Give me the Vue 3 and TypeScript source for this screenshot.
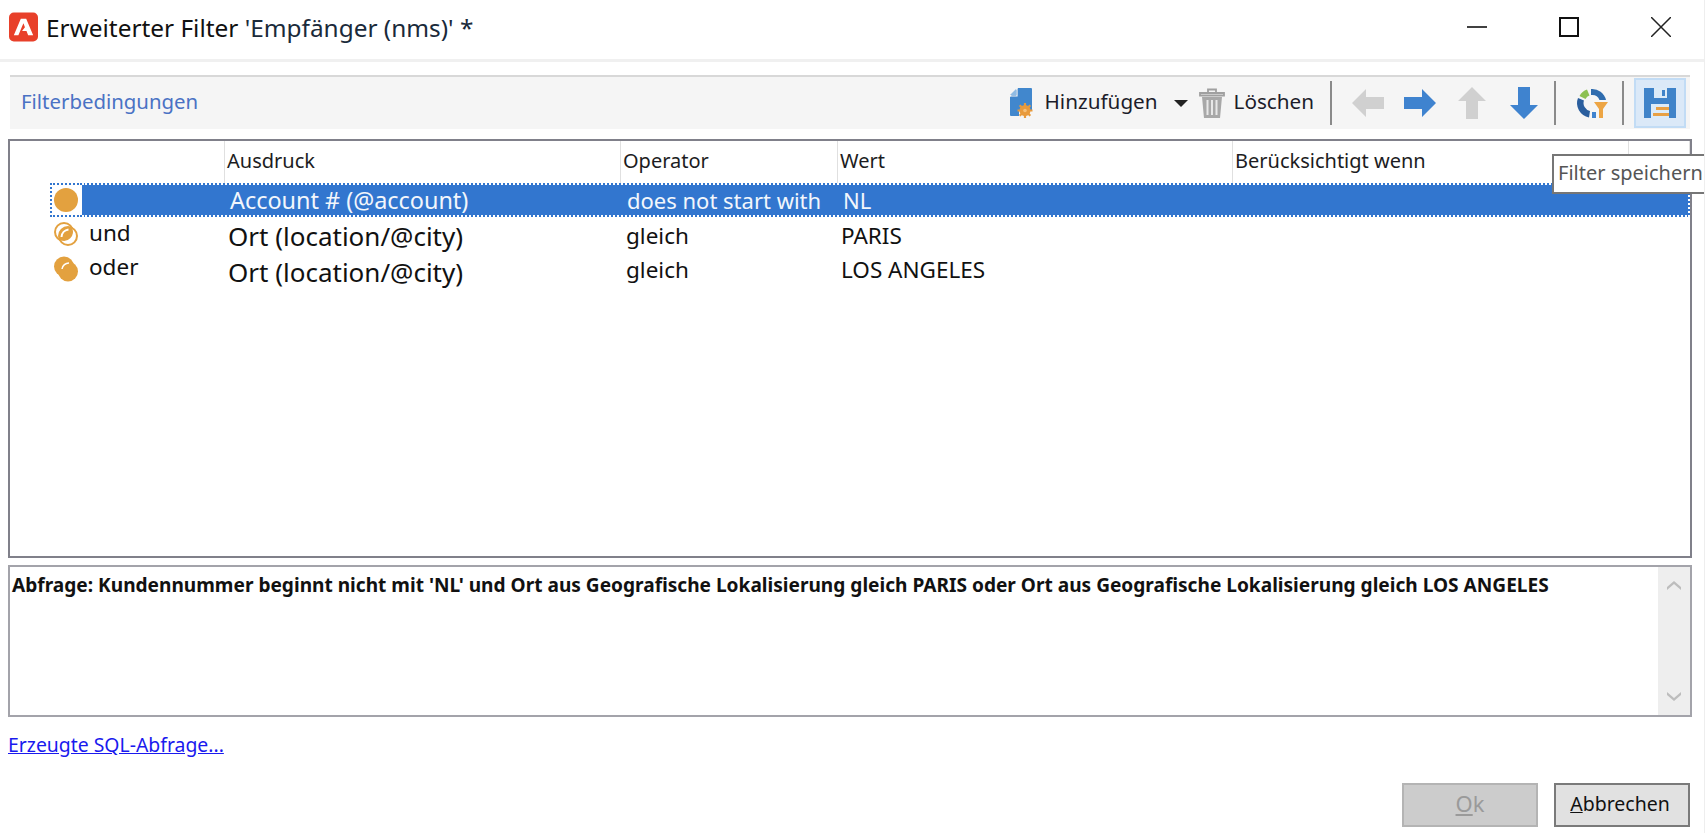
<template>
  <div class="dialog">
    <header class="titlebar">
      <svg class="app-icon" viewBox="0 0 30 30">
        <rect width="30" height="30" rx="5" fill="#e8402a" />
        <path d="M12.2 6.5h5.6L25 23.5h-5.2l-1.7-4.4h-4.6l3-3.8-1.6-4.2-5.2 12.4H5z" fill="#fff" />
      </svg>
      <h1 class="title">Erweiterter Filter <span>'Empfänger (nms)' *</span></h1>
      <div class="window-controls">
        <svg viewBox="0 0 20 20"><path d="M0 10h20" stroke="#111" stroke-width="1.6" /></svg>
        <svg viewBox="0 0 20 20"><rect x="1" y="1" width="18" height="18" fill="none" stroke="#111" stroke-width="2" /></svg>
        <svg viewBox="0 0 20 20"><path d="M0 0l20 20M20 0L0 20" stroke="#222" stroke-width="1.5" /></svg>
      </div>
    </header>

    <main class="content">
      <div class="toolbar">
        <span class="section-name">Filterbedingungen</span>
        <div class="tools">
          <svg class="ic-add" viewBox="0 0 24 30">
            <path d="M9 0h13a1 1 0 0 1 1 1v21H10v6H2a1 1 0 0 1-1-1V9z" fill="#4187cd" />
            <path d="M7 1v6H1z" fill="#8fbbe4" />
            <path d="M1 8h7V0" fill="none" stroke="#f5f5f5" stroke-width="1.2" />
            <path d="M16 15v15M8.500 22.500h15M10.700 17.200l10.600 10.600M21.300 17.200L10.700 27.800" stroke="#e89a3c" stroke-width="2.200" />
            <circle cx="16" cy="22.500" r="5.500" fill="#e89a3c" />
            <circle cx="16" cy="22.500" r="1.800" fill="#f5bf78" />
          </svg>
          <span class="tool-label add-label">Hinzufügen</span>
          <i class="caret"></i>
          <svg class="ic-trash" viewBox="0 0 26 30">
            <path d="M9 4V1.500h8V4M1 5h24v2.500H1z" fill="none" stroke="#a0a0a0" stroke-width="1.800" />
            <path d="M3 9h20l-2 21H5z" fill="#a8a8a8" />
            <path d="M8.500 12v15M13 12v15M17.500 12v15" stroke="#e8e8e8" stroke-width="2" />
          </svg>
          <span class="tool-label del-label">Löschen</span>
          <i class="sep sep-edit"></i>
          <svg class="ic-arrow left" viewBox="0 0 32 28"><path d="M0 14L14 0v8h18v12H14v8z" fill="#d0d0d0" /></svg>
          <svg class="ic-arrow right" viewBox="0 0 32 28"><path d="M32 14L18 0v8H0v12h18v8z" fill="#3f83cf" /></svg>
          <svg class="ic-arrow up" viewBox="0 0 28 32"><path d="M14 0l14 14h-8v18H8V14H0z" fill="#d0d0d0" /></svg>
          <svg class="ic-arrow down" viewBox="0 0 28 32"><path d="M14 32L28 18h-8V0H8v18H0z" fill="#3f83cf" /></svg>
          <i class="sep sep-move"></i>
          <svg class="ic-chart" viewBox="0 0 32 32">
            <path d="M3.500 9A14 14 0 0 1 11 2.500l2.500 6A7.500 7.500 0 0 0 9.500 12z" fill="#8cc152" />
            <path d="M15 2a14 14 0 0 1 15 11h-6.500a8 8 0 0 0-8.500-5z" fill="#2f6cae" />
            <path d="M2 11l6 2.500a8 8 0 0 0 6 10.500l-1 6.500A14.500 14.500 0 0 1 2 11z" fill="#2a5e9e" />
            <path d="M16 25h4v6h-4z" fill="#3f83cf" />
            <path d="M18 15h14l-5 7v9h-4v-9z" fill="#eda544" />
          </svg>
          <i class="sep sep-chart"></i>
          <button class="save-btn" type="button" aria-label="Filter speichern">
            <svg viewBox="0 0 32 32">
              <path d="M0 1h32v30H0z" fill="#3f83c9" />
              <path d="M10 1h13v10H10z" fill="#dcebf8" />
              <path d="M18 3h3v6h-3z" fill="#3f83c9" />
              <path d="M7 17h18v14H7z" fill="#dcebf8" />
              <path d="M12 20h13v3H12zM9 26h16v3H9z" fill="#e8a044" />
            </svg>
          </button>
        </div>
      </div>

      <section class="grid-box">
        <div class="grid-head">
          <div v-for="col in columns" :key="col" class="head-cell">{{ col }}</div>
          <div class="head-cell"></div>
        </div>
        <div v-for="row in rows" :key="row.op + row.value" class="row" :class="[row.kind, { selected: row.selected }]">
          <div class="cell-op">
            <svg class="bubble" viewBox="0 0 24 26">
              <template v-if="row.kind === 'root'">
                <circle cx="12" cy="13" r="12" fill="#e3a13f" />
              </template>
              <template v-else-if="row.kind === 'and'">
                <circle cx="10" cy="11" r="9" fill="#fff" stroke="#e3a13f" stroke-width="2" />
                <circle cx="14" cy="15" r="9" fill="#fff" stroke="#e3a13f" stroke-width="2" />
                <path d="M18 7A9 9 0 0 1 6 19 9 9 0 0 1 18 7z" fill="#e3a13f" />
                <path d="M7.500 16a8 8 0 0 1 7-7.500" fill="none" stroke="#fff" stroke-width="2" />
              </template>
              <template v-else>
                <circle cx="10" cy="10.500" r="10" fill="#e3a13f" />
                <circle cx="14" cy="15.500" r="10" fill="#e3a13f" />
                <path d="M8 13a7 7 0 0 1 7-6" fill="none" stroke="#fff" stroke-width="1.500" />
              </template>
            </svg>
            <span class="op-label">{{ row.op }}</span>
          </div>
          <div class="cell-body">
            <div class="cell expr">{{ row.expr }}</div>
            <div class="cell oper">{{ row.operator }}</div>
            <div class="cell value">{{ row.value }}</div>
          </div>
        </div>
        <div class="tooltip">Filter speichern</div>
      </section>

      <section class="query-box">
        <p class="query-text">Abfrage: Kundennummer beginnt nicht mit 'NL' und Ort aus Geografische Lokalisierung gleich PARIS oder Ort aus Geografische Lokalisierung gleich LOS ANGELES</p>
        <div class="scrollbar">
          <svg viewBox="0 0 14 10"><path d="M0 7l7-6 7 6v3L7 4l-7 6z" fill="#bdbdbd" /></svg>
          <svg viewBox="0 0 14 10"><path d="M0 3l7 6 7-6V0L7 6 0 0z" fill="#bdbdbd" /></svg>
        </div>
      </section>

      <a class="sql-link" href="#">Erzeugte SQL-Abfrage...</a>

      <footer class="actions">
        <button class="btn disabled" type="button" disabled><u>O</u>k</button>
        <button class="btn cancel" type="button"><u>A</u>bbrechen</button>
      </footer>
    </main>
  </div>
</template>

<script setup lang="ts">
interface FilterRow {
  kind: "root" | "and" | "or";
  op: string;
  expr: string;
  operator: string;
  value: string;
  selected?: boolean;
}

const columns = ["", "Ausdruck", "Operator", "Wert", "Berücksichtigt wenn"];

const rows: FilterRow[] = [
  { kind: "root", op: "", expr: "Account # (@account)", operator: "does not start with", value: "NL", selected: true },
  { kind: "and", op: "und", expr: "Ort (location/@city)", operator: "gleich", value: "PARIS" },
  { kind: "or", op: "oder", expr: "Ort (location/@city)", operator: "gleich", value: "LOS ANGELES" },
];
</script>

<style>
html,
body {
  margin: 0;
  background: #fff;
  overflow: hidden;
}
</style>

<style scoped>
.dialog {
  width: 1705px;
  height: 833px;
  box-sizing: border-box;
  display: flex;
  flex-direction: column;
  font-family: "Noto Sans", "Open Sans", sans-serif;
  color: #111;
  background: #fff;
  border-right: 1px solid #eeeeee;
  overflow: hidden;
}

.titlebar {
  height: 59px;
  flex: none;
  display: flex;
  align-items: center;
  padding: 0 0 0 9px;
  border-bottom: 3px solid #f0f0f0;
}

.app-icon {
  width: 29px;
  height: 30px;
  margin-top: -5px;
}

.title {
  margin: -5px 0 0 8px;
  font-size: 24.4px;
  font-weight: 400;
  white-space: nowrap;
}

.title span {
  color: #1a2a3a;
}

.window-controls {
  margin-left: auto;
  margin-top: -5px;
  display: flex;
  gap: 72px;
  padding-right: 33px;
}

.window-controls svg {
  width: 20px;
  height: 20px;
}

.content {
  flex: 1;
  display: flex;
  flex-direction: column;
  padding: 13px 12px 0 8px;
}

.toolbar {
  height: 52px;
  flex: none;
  margin: 0 2px 10px 2px;
  border-top: 2px solid #d8d8d8;
  background: #f5f5f5;
  display: flex;
  align-items: center;
  justify-content: space-between;
}

.section-name {
  margin: -5px 0 0 11px;
  font-size: 20.4px;
  color: #4a72c4;
}

.tools {
  display: flex;
  align-items: center;
  height: 100%;
}

.tool-label {
  font-size: 20.7px;
  color: #1c1c2a;
  margin-top: -5px;
}

.add-label {
  margin-left: 12px;
}

.del-label {
  margin-left: 9px;
}

.ic-add {
  width: 24px;
  height: 30px;
}

.caret {
  width: 0;
  height: 0;
  margin: 0 0 0 16px;
  border-left: 7px solid transparent;
  border-right: 7px solid transparent;
  border-top: 7px solid #222;
}

.ic-trash {
  width: 26px;
  height: 30px;
  margin-left: 11px;
}

.sep {
  width: 2px;
  height: 44px;
  background: #8a8a8a;
}

.sep-edit {
  margin: 0 20px 0 16px;
}

.sep-move {
  margin: 0 20px 0 16px;
}

.sep-chart {
  margin: 0 10px 0 14px;
}

.ic-arrow {
  flex: none;
}

.left,
.right {
  width: 32px;
  height: 28px;
}

.right {
  margin-left: 20px;
}

.up,
.down {
  width: 28px;
  height: 32px;
}

.up {
  margin-left: 22px;
}

.down {
  margin-left: 24px;
}

.ic-chart {
  width: 32px;
  height: 32px;
}

.save-btn {
  width: 52px;
  height: 50px;
  margin: 0 4px 0 0;
  padding: 0;
  box-sizing: border-box;
  display: flex;
  align-items: center;
  justify-content: center;
  background: #dbe9f8;
  border: 2px solid #c2dcf5;
}

.save-btn svg {
  width: 32px;
  height: 32px;
}

.grid-box {
  position: relative;
  height: 419px;
  flex: none;
  box-sizing: border-box;
  border: 2px solid #80808a;
}

.grid-head {
  height: 42px;
  display: grid;
  grid-template-columns: 215px 396px 217px 395px 396px 1fr;
}

.head-cell {
  font-size: 20px;
  line-height: 40px;
  padding-left: 2px;
  border-right: 1px solid #e0e0e0;
  color: #1c1c22;
  white-space: nowrap;
}

.row {
  height: 34px;
  display: flex;
  margin-left: 40px;
}

.row.or {
  height: 35px;
}

.cell-op {
  width: 32px;
  flex: none;
  position: relative;
  display: flex;
  align-items: center;
  padding-left: 4px;
  box-sizing: border-box;
}

.bubble {
  width: 24px;
  height: 26px;
  flex: none;
}

.op-label {
  position: absolute;
  left: 39px;
  top: 0;
  font-size: 22.5px;
  line-height: 32px;
}

.cell-body {
  flex: 1;
  display: flex;
  padding-left: 146px;
  box-sizing: border-box;
}

.cell {
  line-height: 34px;
  padding-top: 2px;
  box-sizing: border-box;
  white-space: nowrap;
  font-size: 22.5px;
}

.expr {
  width: 398px;
  font-size: 26px;
}

.oper {
  width: 215px;
}

.or .expr {
  padding-top: 4px;
}

.selected .cell-op {
  padding-left: 2px;
  border: 2px dotted #3276cf;
  border-right: none;
}

.selected .cell-body {
  background: #3276cf;
  color: #f2f6fc;
  padding-left: 148px;
  border: 2px dotted #fff;
  border-left: none;
}

.selected .cell {
  line-height: 30px;
  padding-top: 0;
  font-size: 22px;
}

.selected .expr {
  width: 397px;
  font-size: 23.4px;
}

.selected .oper {
  width: 216px;
}

.tooltip {
  position: absolute;
  left: 1542px;
  top: 13px;
  width: 155px;
  height: 40px;
  box-sizing: border-box;
  background: #fff;
  border: 2px solid #767676;
  font-size: 20px;
  line-height: 34px;
  padding-left: 4px;
  color: #555;
  white-space: nowrap;
  overflow: hidden;
}

.query-box {
  height: 152px;
  flex: none;
  margin-top: 7px;
  box-sizing: border-box;
  border: 2px solid #a3a3aa;
  display: flex;
}

.query-text {
  flex: 1;
  margin: 0;
  padding: 5px 2px;
  font-size: 19.1px;
  font-weight: 700;
  color: #111;
}

.scrollbar {
  width: 32px;
  flex: none;
  background: #eeeeee;
  display: flex;
  flex-direction: column;
  align-items: center;
  justify-content: space-between;
  padding: 13px 0;
  box-sizing: border-box;
}

.scrollbar svg {
  width: 14px;
  height: 10px;
}

.sql-link {
  margin-top: 16px;
  font-size: 19.4px;
  line-height: 24px;
  color: #1a1aee;
  align-self: flex-start;
}

.actions {
  margin-top: 26px;
  margin-right: 2px;
  display: flex;
  justify-content: flex-end;
  gap: 16px;
}

.btn {
  width: 136px;
  height: 44px;
  box-sizing: border-box;
  background: #e1e1e1;
  border: 2px solid #7a7a7a;
  font: 19.5px "Noto Sans", sans-serif;
  color: #111;
  padding: 0 0 4px;
}

.btn.cancel {
  padding-right: 4px;
}

.btn.disabled {
  background: #cccccc;
  border-color: #b4b4b4;
  color: #9a9a9a;
  font-size: 22px;
}
</style>
